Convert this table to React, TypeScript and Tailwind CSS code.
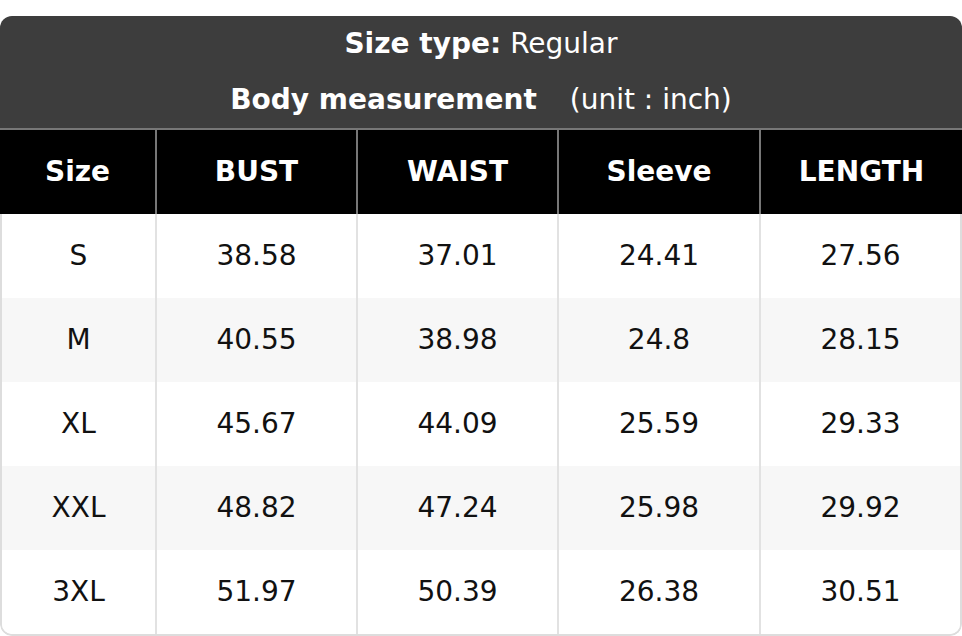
const columns = ["Size", "BUST", "WAIST", "Sleeve", "LENGTH"];

const rows = [
  ["S", "38.58", "37.01", "24.41", "27.56"],
  ["M", "40.55", "38.98", "24.8", "28.15"],
  ["XL", "45.67", "44.09", "25.59", "29.33"],
  ["XXL", "48.82", "47.24", "25.98", "29.92"],
  ["3XL", "51.97", "50.39", "26.38", "30.51"],
];

// body has a 2px left border, so its first column is 2px narrower
const headGrid = "grid grid-cols-[155px_201px_201px_202px_1fr]";
const bodyGrid = "grid grid-cols-[153px_201px_201px_202px_1fr]";

export default function App() {
  return (
    <div
      className="min-h-screen bg-white pt-[16px]"
      style={{ fontFamily: '"DejaVu Sans", Verdana, sans-serif' }}
    >
      <div className="w-[962px] rounded-[12px] overflow-hidden">
        {/* Title block */}
        <div className="bg-[#3d3d3d] text-white text-[28px]">
          <div className="h-[56px] flex items-center justify-center">
            <span className="font-bold">Size type:</span>
            <span className="ml-[9px]">Regular</span>
          </div>
          <div className="h-[56px] flex items-center justify-center">
            <span className="font-bold">Body measurement</span>
            <span className="ml-[33px]">(unit : inch)</span>
          </div>
        </div>

        {/* Column headers */}
        <div className={`${headGrid} bg-black border-t-2 border-[#777777]`}>
          {columns.map((c, i) => (
            <div
              key={c}
              className={`h-[84px] flex items-center justify-center text-white font-bold text-[28px] ${
                i > 0 ? "border-l-2 border-[#777777]" : ""
              }`}
            >
              {c}
            </div>
          ))}
        </div>

        {/* Body */}
        <div className="border-x-2 border-b-2 border-[#dddddd] rounded-b-[12px] overflow-hidden">
          {rows.map((r, ri) => (
            <div
              key={r[0]}
              className={`${bodyGrid} ${ri % 2 === 1 ? "bg-[#f7f7f7]" : "bg-white"}`}
            >
              {r.map((v, i) => (
                <div
                  key={i}
                  className={`h-[84px] flex items-center justify-center text-[#111111] text-[28px] ${
                    i > 0 ? "border-l-2 border-[#e2e2e2]" : ""
                  }`}
                >
                  {v}
                </div>
              ))}
            </div>
          ))}
        </div>
      </div>
    </div>
  );
}
